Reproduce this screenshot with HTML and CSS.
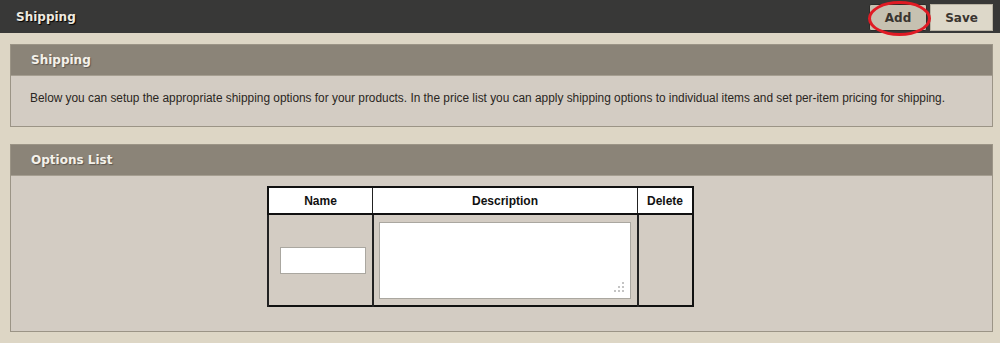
FILE: index.html
```html
<!DOCTYPE html>
<html lang="en">
<head>
  <meta charset="UTF-8" />
  <title>Shipping</title>
  <link rel="stylesheet" href="styles.css">
</head>
<body>

  <div class="topbar">
    <h1>Shipping</h1>
    <div class="actions">
      <button class="btn btn-add">Add</button>
      <button class="btn btn-save">Save</button>
      <span class="mark"></span>
    </div>
  </div>

  <div class="panel">
    <div class="panel-head">Shipping</div>
    <div class="panel-body intro">
      Below you can setup the appropriate shipping options for your products. In the price list you can apply shipping options to individual items and set per-item pricing for shipping.
    </div>
  </div>

  <div class="panel">
    <div class="panel-head">Options List</div>
    <div class="panel-body list">
      <table class="options">
        <tr>
          <th class="col-name">Name</th>
          <th class="col-desc">Description</th>
          <th class="col-del">Delete</th>
        </tr>
        <tr>
          <td class="cell-name"><input type="text" class="name-input"></td>
          <td><textarea class="desc-input"></textarea></td>
          <td></td>
        </tr>
      </table>
    </div>
  </div>

</body>
</html>
```

FILE: styles.css
```css
body {
  margin: 0;
  background: #ddd6c5;
  font-family: "Liberation Sans", Arial, sans-serif;
  font-size: 12px;
  color: #2a2622;
}

.topbar {
  height: 33px;
  background: #383837;
  display: flex;
  align-items: center;
  justify-content: space-between;
  padding: 0 7px 0 16px;
  box-sizing: border-box;
}

.topbar h1 {
  margin: 0;
  font-family: "DejaVu Sans", sans-serif;
  font-size: 12px;
  font-weight: bold;
  color: #eeeae0;
  text-shadow: 1px 1px 1px #000;
}

.actions {
  position: relative;
  display: flex;
  gap: 3px;
  align-self: flex-end;
  margin-bottom: 2px;
}

.btn {
  font-family: "DejaVu Sans", sans-serif;
  font-size: 12px;
  font-weight: bold;
  color: #3a3530;
  border: 1px solid #2c2c2a;
  height: 27px;
  padding: 0;
}

.btn-add {
  width: 58px;
  background: #c6c1b1;
  border-radius: 2px;
}

.btn-save {
  width: 63px;
  background: #ddd8c9;
  border-color: #b9b3a3;
}

/* red annotation round the Add button */
.mark {
  position: absolute;
  left: -1px;
  top: -3px;
  width: 57px;
  height: 29px;
  border: 3px solid #e01b24;
  border-radius: 50%;
  pointer-events: none;
}

.panel {
  margin: 11px 7px 17px 10px;
  border: 1px solid #9b9486;
}

.panel-head {
  height: 30px;
  line-height: 31px;
  background: #8b8478;
  padding-left: 20px;
  font-family: "DejaVu Sans", sans-serif;
  font-size: 12px;
  font-weight: bold;
  color: #f4f1ea;
  text-shadow: 1px 1px 1px #5d574f;
  border-bottom: 1px solid #a59e91;
}

.panel-body {
  background: #d3ccc3;
}

.intro {
  padding: 15px 19px 0;
  height: 35px;
  font-size: 11.87px;
}

.list {
  padding: 10px 0 0;
  height: 155px;
  box-sizing: border-box;
  display: flex;
  justify-content: center;
}

.options {
  border-collapse: collapse;
  border: 2px solid #111;
  margin-left: -42px;
  height: 121px;
}

.options th {
  background: #fff;
  font-size: 12px;
  font-weight: bold;
  color: #111;
  height: 25px;
  border: 1px solid #222;
  border-bottom: 2px solid #111;
  padding: 0 3px;
}

.options td {
  border: 1px solid #222;
  border-left-width: 2px;
  padding: 0;
  text-align: center;
  vertical-align: middle;
}

.options .cell-name {
  padding-left: 6px;
}

.col-name { width: 97px; }
.col-desc { width: 258px; }
.col-del { width: 48px; }

.name-input {
  width: 86px;
  height: 27px;
  box-sizing: border-box;
  border: 1px solid #aaa7a0;
  background: #fff;
  margin-top: 1px;
}

.desc-input {
  display: block;
  margin: 0 auto;
  width: 252px;
  height: 77px;
  box-sizing: border-box;
  border: 1px solid #aaa7a0;
  resize: none;
  background:
    radial-gradient(circle, #c4c4c4 1px, transparent 1.3px) right 5px bottom 5px / 4px 4px no-repeat,
    radial-gradient(circle, #c4c4c4 1px, transparent 1.3px) right 9px bottom 5px / 4px 4px no-repeat,
    radial-gradient(circle, #c4c4c4 1px, transparent 1.3px) right 13px bottom 5px / 4px 4px no-repeat,
    radial-gradient(circle, #c4c4c4 1px, transparent 1.3px) right 5px bottom 9px / 4px 4px no-repeat,
    radial-gradient(circle, #c4c4c4 1px, transparent 1.3px) right 9px bottom 9px / 4px 4px no-repeat,
    radial-gradient(circle, #c4c4c4 1px, transparent 1.3px) right 5px bottom 13px / 4px 4px no-repeat,
    #fff;
}
```
